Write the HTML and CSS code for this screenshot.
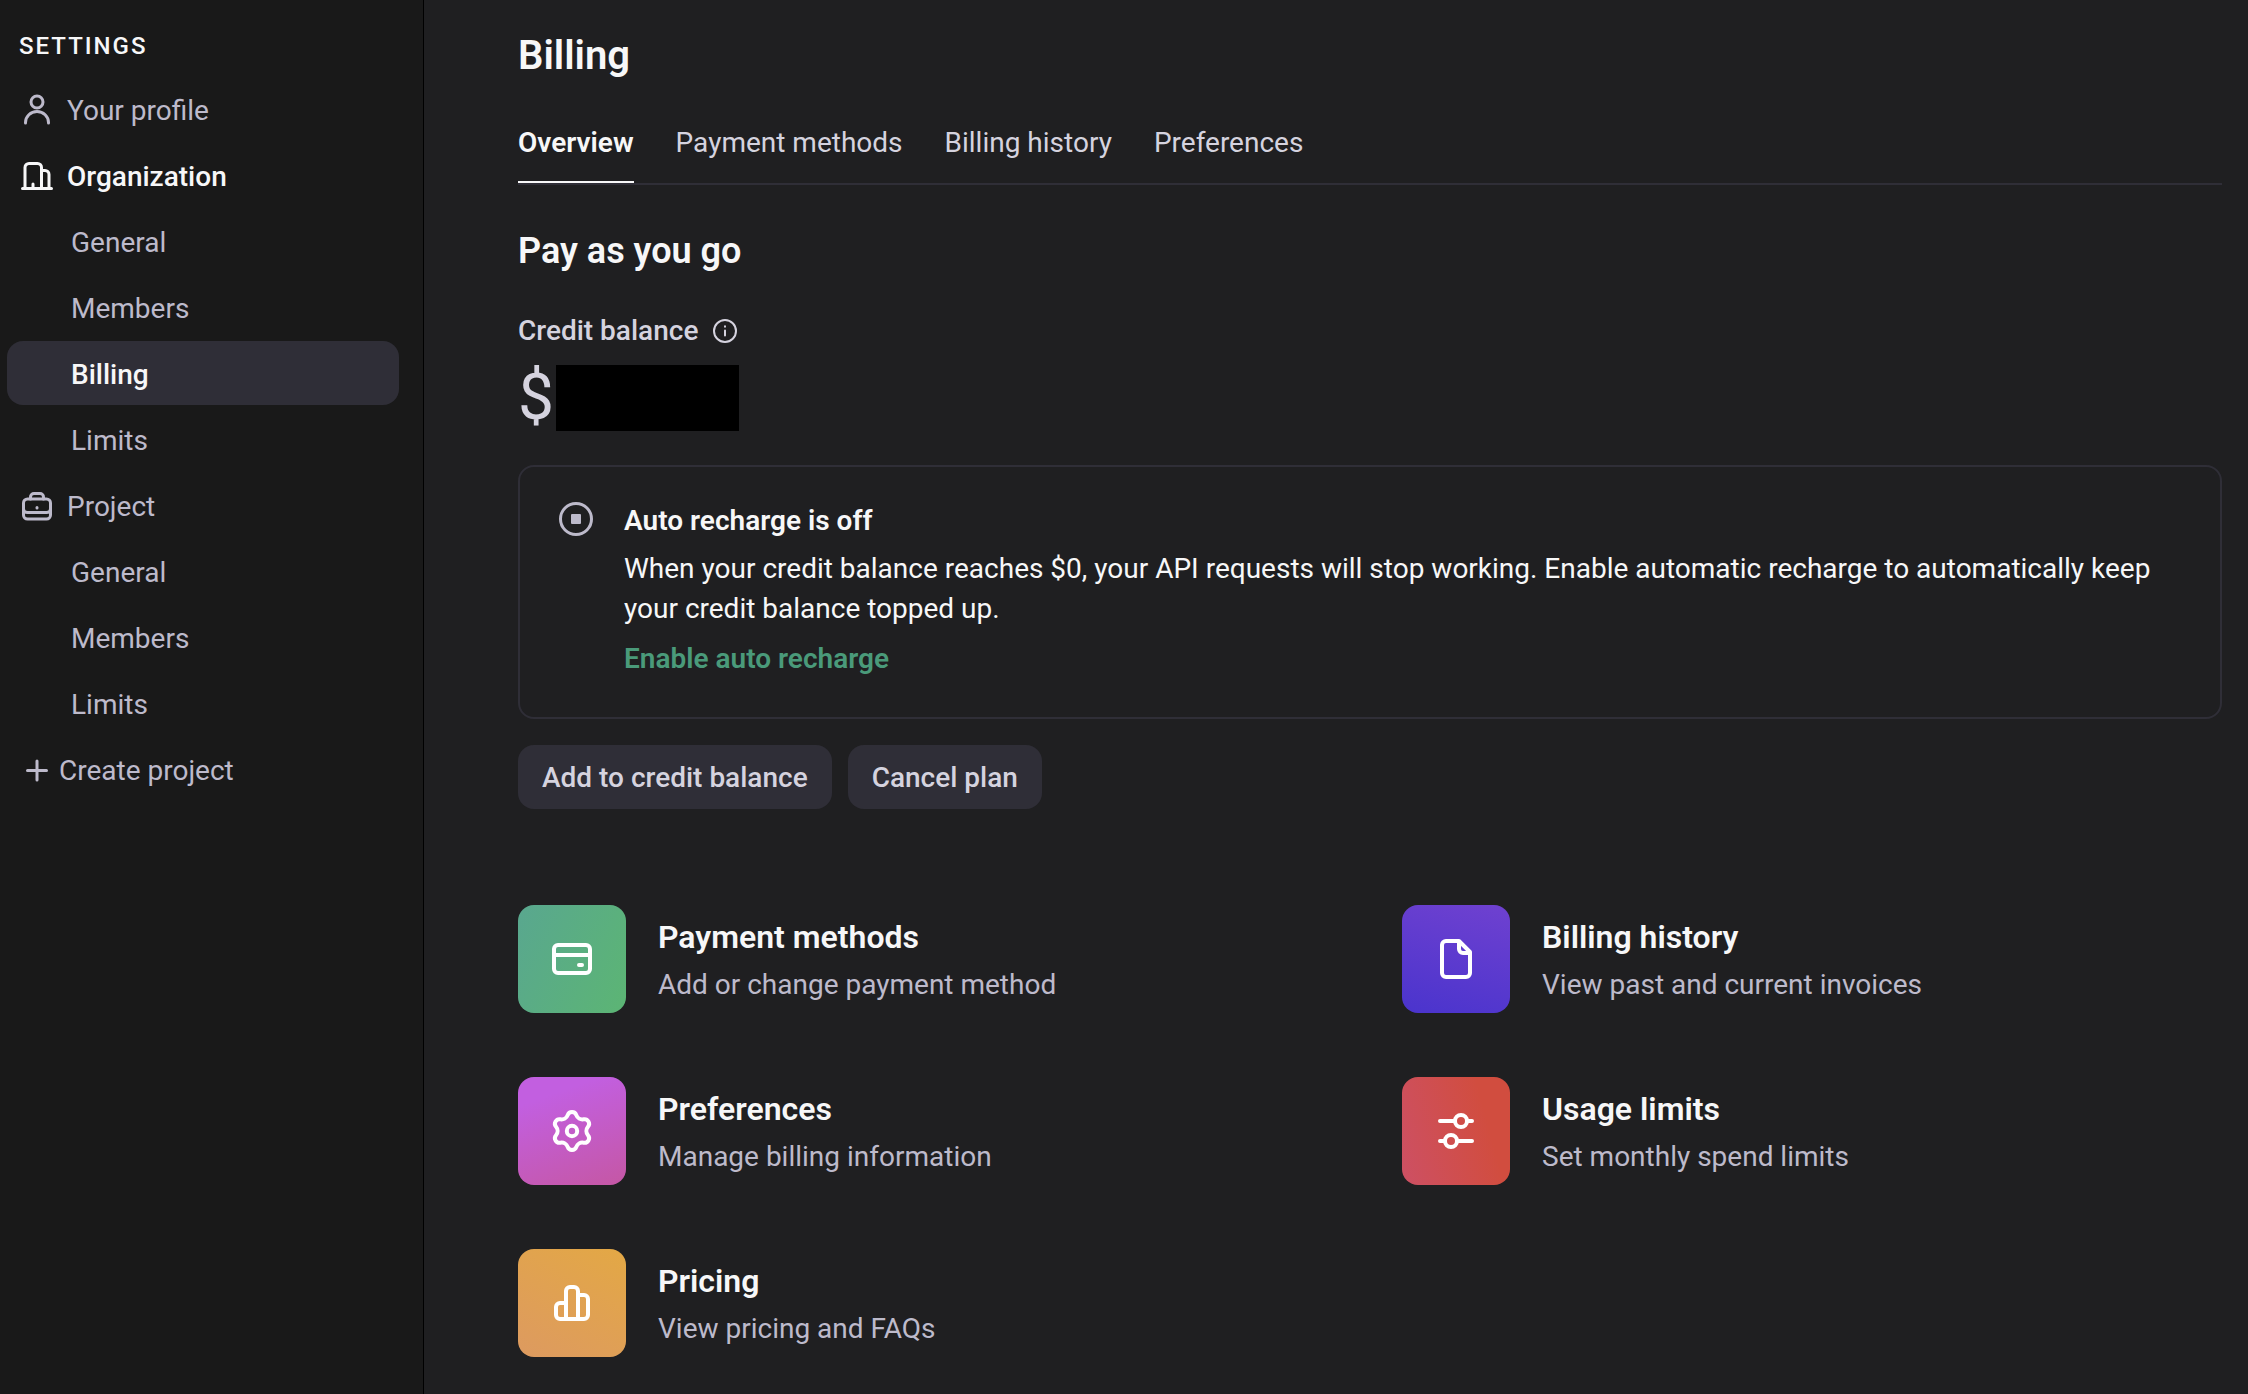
FILE: index.html
```
<!DOCTYPE html>
<html lang="en">
<head>
<meta charset="utf-8">
<meta name="viewport" content="width=device-width, initial-scale=1">
<title>Billing</title>
<link rel="stylesheet" href="styles.css">
</head>
<body>
<div class="app">
  <aside class="sidebar">
    <h2 class="sidebar-title">SETTINGS</h2>
    <nav class="nav" aria-label="Settings">
      <a class="nav-item" href="#profile">
        <svg class="nav-icon" viewBox="0 0 36 36" aria-hidden="true"><circle cx="18" cy="9" r="6"/><path d="M6.500 30v-.5a11.500 11 0 0 1 23 0v.5"/></svg>
        Your profile
      </a>
      <a class="nav-item nav-item-current" href="#organization">
        <svg class="nav-icon" viewBox="0 0 36 36" aria-hidden="true"><path d="M3.500 29.500h29M6 29V8.500a4 4 0 0 1 4-4h8.500a4 4 0 0 1 4 4V29M22.500 11.500H26a4 4 0 0 1 4 4V29M14 29v-4"/></svg>
        Organization
      </a>
      <a class="nav-item nav-sub" href="#org-general">General</a>
      <a class="nav-item nav-sub" href="#org-members">Members</a>
      <a class="nav-item nav-sub nav-item-current nav-item-active" href="#billing" aria-current="page">Billing</a>
      <a class="nav-item nav-sub" href="#org-limits">Limits</a>
      <a class="nav-item" href="#project">
        <svg class="nav-icon" viewBox="0 0 36 36" aria-hidden="true"><rect x="4.500" y="10" width="27" height="20" rx="4"/><path d="M11.500 10V8a3.500 3.500 0 0 1 3.500-3.500h6A3.500 3.500 0 0 1 24.500 8v2M4.500 19.500a4 4 0 0 0 4 4h19a4 4 0 0 0 4-4"/><path d="M18 18.500v.5"/></svg>
        Project
      </a>
      <a class="nav-item nav-sub" href="#project-general">General</a>
      <a class="nav-item nav-sub" href="#project-members">Members</a>
      <a class="nav-item nav-sub" href="#project-limits">Limits</a>
      <button class="nav-item nav-create" type="button">
        <svg class="nav-icon" viewBox="0 0 36 36" aria-hidden="true"><path d="M18 8v19M8.500 17.500h19"/></svg>
        Create project
      </button>
    </nav>
  </aside>

  <main class="main">
    <h1 class="page-title">Billing</h1>
    <nav class="tabs" aria-label="Billing sections">
      <a class="tab tab-active" href="#overview" aria-current="page">Overview</a>
      <a class="tab" href="#payment-methods">Payment methods</a>
      <a class="tab" href="#history">Billing history</a>
      <a class="tab" href="#preferences">Preferences</a>
    </nav>

    <h2 class="plan-title">Pay as you go</h2>
    <div class="balance-label">
      Credit balance
      <svg class="info-icon" viewBox="0 0 24 24" aria-hidden="true"><circle cx="12" cy="12" r="11"/><path d="M12 11.500v5M12 7.200v.6"/></svg>
    </div>
    <div class="balance">$<span class="balance-hidden"></span></div>

    <section class="notice">
      <svg class="notice-icon" viewBox="0 0 36 36" aria-hidden="true"><circle cx="18" cy="18" r="15.500"/><rect x="13" y="13" width="10" height="10" rx="1"/></svg>
      <div class="notice-body">
        <h3 class="notice-title">Auto recharge is off</h3>
        <p class="notice-text">When your credit balance reaches $0, your API requests will stop working. Enable automatic recharge to automatically keep your credit balance topped up.</p>
        <a class="notice-link" href="#auto-recharge">Enable auto recharge</a>
      </div>
    </section>

    <div class="actions">
      <button class="button" type="button">Add to credit balance</button>
      <button class="button" type="button">Cancel plan</button>
    </div>

    <div class="links">
      <a class="link-card" href="#payment-methods">
        <span class="tile tile-green"><svg class="tile-icon" viewBox="0 0 24 24" aria-hidden="true"><rect x="3" y="5" width="18" height="14" rx="2"/><path d="M3 10h18M15.500 15h1.500"/></svg></span>
        <span class="link-text"><span class="link-title">Payment methods</span><span class="link-note">Add or change payment method</span></span>
      </a>
      <a class="link-card" href="#history">
        <span class="tile tile-indigo"><svg class="tile-icon" viewBox="0 0 24 24" aria-hidden="true"><path d="M13.500 3H7a2 2 0 0 0-2 2v14a2 2 0 0 0 2 2h10a2 2 0 0 0 2-2V8.500L13.500 3v4a2 2 0 0 0 2 2H19"/></svg></span>
        <span class="link-text"><span class="link-title">Billing history</span><span class="link-note">View past and current invoices</span></span>
      </a>
      <a class="link-card" href="#preferences">
        <span class="tile tile-pink"><svg class="tile-icon" viewBox="-12 -12 24 24" aria-hidden="true"><path d="M-2.171-7.960A2.300 2.300 0 0 1 2.171-7.960A3.220 3.220 0 0 0 5.808-5.860A2.300 2.300 0 0 1 7.979-2.100A3.220 3.220 0 0 0 7.979 2.100A2.300 2.300 0 0 1 5.808 5.860A3.220 3.220 0 0 0 2.171 7.960A2.300 2.300 0 0 1-2.171 7.960A3.220 3.220 0 0 0-5.808 5.860A2.300 2.300 0 0 1-7.979 2.100A3.220 3.220 0 0 0-7.979-2.100A2.300 2.300 0 0 1-5.808-5.860A3.220 3.220 0 0 0-2.171-7.960Z"/><circle r="2.600"/></svg></span>
        <span class="link-text"><span class="link-title">Preferences</span><span class="link-note">Manage billing information</span></span>
      </a>
      <a class="link-card" href="#limits">
        <span class="tile tile-red"><svg class="tile-icon" viewBox="0 0 24 24" aria-hidden="true"><path d="M4 7h7.500M17.500 7H20M4 17h2.500M12.500 17H20"/><circle cx="14.500" cy="7" r="3"/><circle cx="9.500" cy="17" r="3"/></svg></span>
        <span class="link-text"><span class="link-title">Usage limits</span><span class="link-note">Set monthly spend limits</span></span>
      </a>
      <a class="link-card" href="#pricing">
        <span class="tile tile-orange"><svg class="tile-icon" viewBox="0 0 24 24" aria-hidden="true"><path d="M9 20V6a2 2 0 0 1 2-2h2a2 2 0 0 1 2 2v14M9 12H6a2 2 0 0 0-2 2v4a2 2 0 0 0 2 2h12a2 2 0 0 0 2-2v-8a2 2 0 0 0-2-2h-3"/></svg></span>
        <span class="link-text"><span class="link-title">Pricing</span><span class="link-note">View pricing and FAQs</span></span>
      </a>
    </div>
  </main>
</div>
</body>
</html>
```
FILE: styles.css
```
* {
  box-sizing: border-box;
}

body {
  margin: 0;
  background: #1f1f21;
  color: #f7f7f8;
  font-family: Roboto, "Liberation Sans", sans-serif;
  font-size: 28px;
  line-height: 40px;
}

h1, h2, h3, p {
  margin: 0;
}

a {
  color: inherit;
  text-decoration: none;
}

svg {
  flex: none;
  fill: none;
  stroke: currentColor;
  stroke-linecap: round;
  stroke-linejoin: round;
}

.app {
  display: grid;
  grid-template-columns: 424px 1fr;
  min-height: 100vh;
}

/* Sidebar */

.sidebar {
  padding: 26px 24px 24px 7px;
  background: #191919;
  border-right: 1px solid #000;
}

.sidebar-title {
  padding-left: 12px;
  font-size: 24px;
  font-weight: 500;
  letter-spacing: 2px;
}

.nav {
  display: flex;
  flex-direction: column;
  gap: 2px;
  margin-top: 11px;
}

.nav-item {
  display: flex;
  align-items: center;
  gap: 12px;
  height: 64px;
  padding: 3px 12px 0;
  border: 0;
  border-radius: 16px;
  background: none;
  color: #bdbacb;
  font: inherit;
  text-align: left;
}

.nav-icon {
  width: 36px;
  height: 36px;
  stroke-width: 3;
}

.nav-sub {
  padding-left: 64px;
}

.nav-item-current {
  color: #f7f7f8;
  font-weight: 500;
}

.nav-item-active {
  background: #2f2e37;
}

.nav-create {
  gap: 4px;
}

/* Page */

.main {
  padding: 32px 26px 36px 94px;
}

.page-title {
  font-size: 40px;
  font-weight: 600;
  line-height: 48px;
}

.tabs {
  display: flex;
  gap: 42px;
  margin-top: 43px;
  border-bottom: 2px solid #2f2e37;
}

.tab {
  height: 60px;
  color: #d5d3df;
}

.tab-active {
  border-bottom: 2px solid #f7f7f8;
  color: #f7f7f8;
  font-weight: 600;
}

.plan-title {
  margin-top: 42px;
  font-size: 36px;
  font-weight: 600;
  line-height: 48px;
}

.balance-label {
  display: flex;
  align-items: center;
  gap: 15px;
  margin-top: 36px;
  color: #d5d3df;
  font-weight: 500;
}

.info-icon {
  width: 24px;
  height: 24px;
  stroke-width: 2;
}

.balance {
  display: flex;
  align-items: center;
  gap: 2px;
  margin-top: 14px;
  color: #d5d3df;
  font-size: 64px;
  line-height: 66px;
}

.balance-hidden {
  width: 183px;
  height: 66px;
  background: #000;
}

.notice {
  display: flex;
  gap: 30px;
  margin-top: 34px;
  padding: 34px 38px 38px;
  border: 2px solid #2f2e37;
  border-radius: 16px;
}

.notice-icon {
  width: 36px;
  height: 36px;
  color: #bdbacb;
  stroke-width: 3;
}

.notice-icon rect {
  fill: currentColor;
  stroke: none;
}

.notice-title {
  font-size: 28px;
  font-weight: 600;
}

.notice-text {
  margin: 8px 0 10px;
}

.notice-link {
  color: #4a9a7a;
  font-weight: 600;
}

.actions {
  display: flex;
  gap: 16px;
  margin-top: 26px;
}

.button {
  height: 64px;
  padding: 2px 24px 0;
  border: 0;
  border-radius: 16px;
  background: #2f2e37;
  color: #d5d3df;
  font: inherit;
  font-weight: 500;
}

.links {
  display: grid;
  grid-template-columns: 1fr 1fr;
  gap: 64px;
  margin-top: 96px;
}

.link-card {
  display: flex;
  align-items: center;
  gap: 32px;
}

.tile {
  display: grid;
  place-items: center;
  width: 108px;
  height: 108px;
  border-radius: 16px;
  color: #fff;
}

.tile-icon {
  width: 48px;
  height: 48px;
  stroke-width: 2;
}

.tile-green {
  background: linear-gradient(115deg, #59a78f, #5cb574);
}

.tile-indigo {
  background: linear-gradient(15deg, #4a34cd, #6f41d0);
}

.tile-pink {
  background: linear-gradient(160deg, #c25fe0 20%, #c557a4);
}

.tile-red {
  background: linear-gradient(75deg, #cd5064, #d14d3f 75%);
}

.tile-orange {
  background: linear-gradient(30deg, #dd9a60, #e3a845);
}

.link-text {
  display: flex;
  flex-direction: column;
  gap: 6px;
  padding-top: 2px;
}

.link-title {
  font-size: 32px;
  font-weight: 600;
  line-height: 44px;
}

.link-note {
  color: #bdbacb;
}
```
